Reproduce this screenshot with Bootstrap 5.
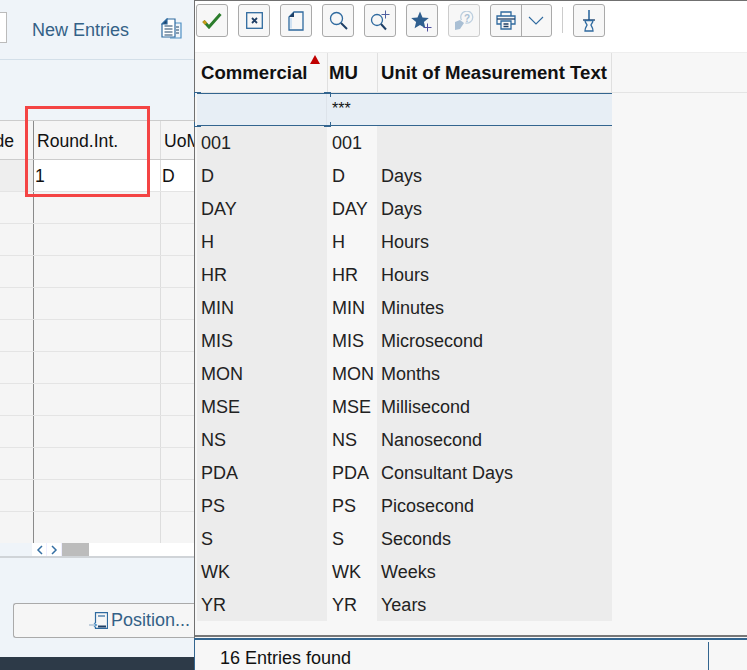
<!DOCTYPE html>
<html lang="en"><head><meta charset="utf-8"><title>Unit of Measurement</title>
<link href="https://cdn.jsdelivr.net/npm/bootstrap@5.3.0/dist/css/bootstrap.min.css" rel="stylesheet">
<style>
html,body{margin:0;height:670px;overflow:hidden;background:#eff4f9}
body{font-family:"Liberation Sans",Arial,sans-serif;font-size:18px;color:#111;line-height:1.2}
.stage{width:747px;height:670px;overflow:hidden}
.lp{width:194px;flex:none;height:670px;background:#eff4f9;overflow:hidden}
.ltop{height:60px;flex:none;border-bottom:1px solid #d3dfe9;padding-right:13px}
.stub{width:7px;height:31px;background:#fff;border:1px solid #bbb;border-left:0;margin-top:12px;flex:none}
.newent{color:#346187;font-size:18px;margin-left:25px;margin-top:20px;white-space:nowrap}
.docic{margin-left:32px;margin-top:18px;flex:none}
.lband{height:60px;flex:none}
.lgrid{background:#f5f5f5;height:423px;flex:none;overflow:hidden}
.lrow{height:32px;border-bottom:1px solid #e4e4e4}
.lrow.lhead{height:40px;border-top:1px solid #ccc;border-bottom:1px solid #ccc;font-size:17.6px}
.lc1{width:33px;flex:none;background:#f5f5f5;white-space:nowrap;overflow:hidden}
.lc2{width:128px;flex:none;border-left:1px solid #8a8a8a;border-right:1px solid #ddd}
.lc3{flex:1;white-space:nowrap;overflow:hidden}
.lhead>div{display:flex;align-items:center;background:#f5f5f5;color:#111;padding-top:4px}
.lhead .lc1{justify-content:flex-end;padding-right:19px;overflow:visible}
.lhead .lc2,.lhead .lc3{padding-left:3px}
.lsel{font-size:17.6px;background:#fff}
.lsel .lc1{background:#eee}
.lsel .lc2{background:#fff;padding-left:1px;padding-top:2px}
.lsel .lc3{padding-left:1px;padding-top:2px}
.lsel>div{display:flex;align-items:center}
.lscroll{height:15px;background:#fff;border-bottom:2px solid #d0d4d8;flex:none}
.lscroll .sp{width:32px;background:#eff4f9}
.lscroll .ar{width:15px;color:#346fa3;display:flex;align-items:center;justify-content:center;background:#fff;border-right:1px solid #eef}
.lscroll .th{width:27px;background:#bcbcbc}
.posbtn{margin:45px 0 0 13px;height:35px;border:1px solid #aaa;border-right:0;border-radius:3px 0 0 3px;background:#f6f6f6;color:#346187;font-size:18px;padding-right:4px;white-space:nowrap;flex:none}
.posbtn svg{flex:none;margin-right:3px}
.darkbar{height:13px;background:#2d3a48;margin-top:19px;flex:none}

.dlg{flex:1;height:670px;background:#f7f7f7;border-left:1px solid #707070;border-top:1px solid #707070;min-width:0}
.tb{height:51px;flex:none;background:#fff;padding:3px 0 0 1px;gap:10px}
.tbtn{width:32px;height:33px;border:1px solid #aaa;border-radius:3px;background:#f7f7f7;display:flex;align-items:center;justify-content:center;padding:0;flex:none}
.tbtn.off{border-color:#ccc}
.tgroup{width:62px;height:33px;border:1px solid #aaa;border-radius:3px;background:#f7f7f7;flex:none}
.tgroup>span{flex:1;display:flex;align-items:center;justify-content:center}
.tgroup>span+span{border-left:1px solid #aaa}
.tsep{width:1px;height:26px;background:#ccc;margin:3px 0 0 0;flex:none}
.hrow{height:41px;flex:none;border-top:1px solid #eee;border-bottom:1px solid #e4e4e4;font-weight:700;font-size:18.6px;padding-left:2px}
.c1{width:130px;flex:none;padding-left:4px}
.c2{width:50px;flex:none;padding-left:5px}
.c3{width:235px;flex:none;padding-left:4px;white-space:nowrap}
.hrow>div{display:flex;align-items:center;border-right:1px solid #e0e0e0;position:relative;padding-top:2px}
.hrow .c1{width:131px;padding-left:4px}
.hrow .c2{width:50px;padding-left:1px}
.hrow .c3{width:234px;padding-left:3px}
.sorttri{position:absolute;right:7px;top:2px;width:0;height:0;border-left:5px solid transparent;border-right:5px solid transparent;border-bottom:9px solid #c00000}
.frow{height:33px;flex:none;margin-left:2px;width:415px;background:#e7eef5;border-top:1px solid #33658f;border-bottom:1px solid #33658f;font-size:16px;position:relative}
.frow .c1{border-right:1px solid #dde3ea}
.frow .c2{padding-left:5px;padding-top:5px}
.cm{position:absolute;width:7px;height:5px;border-color:#33658f;border-style:solid;border-width:0}
.dbody{padding-left:2px;flex:none}
.drow{height:33px;font-size:18px;color:#222}
.drow>div{display:flex;align-items:center;padding-top:2px}
.drow .c1{background:#ececec}
.drow .c2{background:#f7f7f7}
.drow .c3{background:#ececec}
.dfoot{height:16px;border-bottom:2px solid #777;flex:none}
.statuswrap{flex:1 1 0;min-height:0;overflow:hidden;margin:1px 0 0 -1px;border-top:2px solid #33658f;border-left:1px solid #33658f;background:#f7f7f7}
.status{padding-left:25px;font-size:18px;padding-top:8px;white-space:nowrap}
.statusline{width:1px;background:#33658f;margin:2px 38px 0 0}
.redbox{position:absolute;left:25px;top:106px;width:125px;height:91px;border:3px solid #f44444;pointer-events:none}
</style></head>
<body>
<div class="stage d-flex position-relative">
  <div class="lp d-flex flex-column">
    <div class="ltop d-flex align-items-start">
      <div class="stub"></div>
      <div class="newent">New Entries</div>
      <svg class="docic" width="21" height="22" viewBox="0 0 21 22" fill="none" stroke="#2f6a9f" stroke-width="1.200"><path d="M13 5h7v15H9" stroke="#4f8fc4"/><path d="M1 6 6 1h8v18H1z" fill="#fff"/><path d="M1 6h5V1z" fill="#1e3f66"/><path d="M3.500 8h8M3.500 11h8M3.500 14h8M3.500 17h8" stroke="#1e4468"/><path d="M15 9h3M15 12h3M15 15h3" stroke="#1e4468"/></svg>
    </div>
    <div class="lband"></div>
    <div class="lgrid">
      <div class="lrow lhead d-flex"><div class="lc1">de</div><div class="lc2">Round.Int.</div><div class="lc3">UoM</div></div>
      <div class="lrow lsel d-flex"><div class="lc1"></div><div class="lc2">1</div><div class="lc3">D</div></div>
      <div class="lrow d-flex"><div class="lc1"></div><div class="lc2"></div><div class="lc3"></div></div>
      <div class="lrow d-flex"><div class="lc1"></div><div class="lc2"></div><div class="lc3"></div></div>
      <div class="lrow d-flex"><div class="lc1"></div><div class="lc2"></div><div class="lc3"></div></div>
      <div class="lrow d-flex"><div class="lc1"></div><div class="lc2"></div><div class="lc3"></div></div>
      <div class="lrow d-flex"><div class="lc1"></div><div class="lc2"></div><div class="lc3"></div></div>
      <div class="lrow d-flex"><div class="lc1"></div><div class="lc2"></div><div class="lc3"></div></div>
      <div class="lrow d-flex"><div class="lc1"></div><div class="lc2"></div><div class="lc3"></div></div>
      <div class="lrow d-flex"><div class="lc1"></div><div class="lc2"></div><div class="lc3"></div></div>
      <div class="lrow d-flex"><div class="lc1"></div><div class="lc2"></div><div class="lc3"></div></div>
      <div class="lrow d-flex"><div class="lc1"></div><div class="lc2"></div><div class="lc3"></div></div>
      <div class="lrow d-flex"><div class="lc1"></div><div class="lc2"></div><div class="lc3"></div></div>
    </div>
    <div class="lscroll d-flex">
      <div class="sp"></div>
      <div class="ar"><svg width="7" height="10" viewBox="0 0 7 10" fill="none" stroke="currentColor" stroke-width="1.500"><path d="M6 1 2 5l4 4"/></svg></div>
      <div class="ar"><svg width="7" height="10" viewBox="0 0 7 10" fill="none" stroke="currentColor" stroke-width="1.500"><path d="M1 1l4 4-4 4"/></svg></div>
      <div class="th"></div>
    </div>
    <div class="posbtn d-flex align-items-center justify-content-end">
      <svg width="19" height="17" viewBox="0 0 19 17" fill="none" stroke="#2f6a9f" stroke-width="1.200"><path d="M6.500 11V.6h12v15.800h-12V15"/><path d="M9 4h7" stroke-width="1.200"/><path d="M9 14.500h8" stroke="#1e3f66" stroke-width="2"/><path d="M0 13h7" stroke="#b6c6d6" stroke-width="1.600"/><path d="M5 11l2.500 2L5 15" stroke="#4f8fc4"/></svg>
      <span>Position...</span>
    </div>
    <div class="darkbar"></div>
  </div>

  <div class="dlg d-flex flex-column">
    <div class="tb d-flex align-items-start">
      <button type="button" class="tbtn" aria-label="OK"><svg width="20" height="17" viewBox="0 0 20 17" fill="none"><path d="M1.500 9l5.500 6L18.500 2" stroke="#2c7d2c" stroke-width="3"/><path d="M1.500 9 4 11.700" stroke="#c79a1b" stroke-width="3"/></svg></button>
      <button type="button" class="tbtn" aria-label="Cancel"><svg width="17" height="17" viewBox="0 0 17 17" fill="none"><rect x=".7" y=".7" width="15.600" height="15.600" stroke="#2f6a9f" stroke-width="1.300"/><path d="M6 6l5 5M11 6l-5 5" stroke="#1e3f66" stroke-width="1.800"/></svg></button>
      <button type="button" class="tbtn" aria-label="Copy"><svg width="16" height="20" viewBox="0 0 16 20" fill="none"><path d="M6 1h9v18H1V6z" stroke="#2f6a9f" stroke-width="1.300"/><path d="M1 6l5-5v5z" fill="#1e3f66"/><path d="M3 7v10.500" stroke="#a9cdee"/></svg></button>
      <button type="button" class="tbtn" aria-label="Find"><svg width="19" height="19" viewBox="0 0 19 19" fill="none"><circle cx="7.500" cy="7.500" r="6" stroke="#2f6a9f" stroke-width="1.300"/><path d="M12 12l6 6" stroke="#1e3f66" stroke-width="2"/></svg></button>
      <button type="button" class="tbtn" aria-label="Find next"><svg width="21" height="21" viewBox="0 0 21 21" fill="none"><circle cx="7" cy="10" r="5.500" stroke="#2f6a9f" stroke-width="1.300"/><path d="M11 14l5 5.500" stroke="#1e3f66" stroke-width="2"/><path d="M15.500 .5v8M11.500 4.500h8" stroke="#4f5fa0" stroke-width="1"/></svg></button>
      <button type="button" class="tbtn" aria-label="Favourite"><svg width="22" height="22" viewBox="0 0 22 22"><path d="M9 1.500l2.500 6 6.300.4-4.900 4.100 1.500 6.200L9 15l-5.400 3.200 1.500-6.200L.2 7.900l6.300-.4z" fill="#2f5f8f"/><path d="M16.500 13.500v8M12.500 17.500h8" stroke="#4f4fa0" stroke-width="1" fill="none"/></svg></button>
      <button type="button" class="tbtn off" aria-label="Help" disabled><svg width="20" height="20" viewBox="0 0 20 20" fill="none"><path d="M1 19V11l5-2 4 3-4 6z" fill="#a9bfd4"/><path d="M7.500 9a6 6 0 1 1 4 3" stroke="#bdcfdf" stroke-width="1.300"/><text x="13" y="10.500" text-anchor="middle" font-size="10" font-weight="700" font-family="Liberation Sans" fill="#a9bfd4">?</text></svg></button>
      <div class="tgroup d-flex">
        <span><svg width="20" height="19" viewBox="0 0 20 19" fill="none" stroke="#2f6a9f" stroke-width="1.300"><path d="M5 5V1h10v4"/><path d="M5 13H1V5h18v8h-4"/><path d="M1 8h18" stroke="#1e3f66"/><path d="M5 10h10v8H5z" fill="#f7f7f7"/><path d="M7.500 13h5M7.500 15.500h5" stroke="#1e3f66"/></svg></span>
        <span><svg width="16" height="9" viewBox="0 0 16 9" fill="none" stroke="#2f6a9f" stroke-width="1.100"><path d="M1 1l7 7 7-7"/></svg></span>
      </div>
      <div class="tsep"></div>
      <button type="button" class="tbtn" aria-label="Personalize"><svg width="14" height="22" viewBox="0 0 14 22" fill="none" stroke="#2f6a9f" stroke-width="1.300"><path d="M7 0v10" stroke-width="1.600"/><path d="M1 10h12" stroke="#1e3f66"/><path d="M3 10.500h8c0 2.500-2 3.500-2 4.500s2 2 2 6H3c0-4 2-5 2-6s-2-2-2-4.500z"/></svg></button>
    </div>
    <div class="hrow d-flex">
      <div class="c1">Commercial<span class="sorttri"></span></div>
      <div class="c2">MU</div>
      <div class="c3">Unit of Measurement Text</div>
    </div>
    <div class="frow d-flex">
      <div class="c1"></div><div class="c2">***</div>
      <span class="cm" style="left:-3px;top:-2px;border-left-width:1px;border-top-width:1px"></span>
      <span class="cm" style="left:127px;top:-2px;border-right-width:1px;border-top-width:1px"></span>
      <span class="cm" style="left:-3px;bottom:-2px;border-left-width:1px;border-bottom-width:1px"></span>
      <span class="cm" style="left:127px;bottom:-2px;border-right-width:1px;border-bottom-width:1px"></span>
    </div>
    <div class="dbody">
      <div class="drow d-flex"><div class="c1">001</div><div class="c2">001</div><div class="c3"></div></div>
      <div class="drow d-flex"><div class="c1">D</div><div class="c2">D</div><div class="c3">Days</div></div>
      <div class="drow d-flex"><div class="c1">DAY</div><div class="c2">DAY</div><div class="c3">Days</div></div>
      <div class="drow d-flex"><div class="c1">H</div><div class="c2">H</div><div class="c3">Hours</div></div>
      <div class="drow d-flex"><div class="c1">HR</div><div class="c2">HR</div><div class="c3">Hours</div></div>
      <div class="drow d-flex"><div class="c1">MIN</div><div class="c2">MIN</div><div class="c3">Minutes</div></div>
      <div class="drow d-flex"><div class="c1">MIS</div><div class="c2">MIS</div><div class="c3">Microsecond</div></div>
      <div class="drow d-flex"><div class="c1">MON</div><div class="c2">MON</div><div class="c3">Months</div></div>
      <div class="drow d-flex"><div class="c1">MSE</div><div class="c2">MSE</div><div class="c3">Millisecond</div></div>
      <div class="drow d-flex"><div class="c1">NS</div><div class="c2">NS</div><div class="c3">Nanosecond</div></div>
      <div class="drow d-flex"><div class="c1">PDA</div><div class="c2">PDA</div><div class="c3">Consultant Days</div></div>
      <div class="drow d-flex"><div class="c1">PS</div><div class="c2">PS</div><div class="c3">Picosecond</div></div>
      <div class="drow d-flex"><div class="c1">S</div><div class="c2">S</div><div class="c3">Seconds</div></div>
      <div class="drow d-flex"><div class="c1">WK</div><div class="c2">WK</div><div class="c3">Weeks</div></div>
      <div class="drow d-flex"><div class="c1">YR</div><div class="c2">YR</div><div class="c3">Years</div></div>
    </div>
    <div class="dfoot"></div>
    <div class="statuswrap d-flex">
      <div class="status flex-grow-1">16 Entries found</div>
      <div class="statusline"></div>
    </div>
  </div>
  <div class="redbox"></div>
</div>
<script src="https://cdn.jsdelivr.net/npm/bootstrap@5.3.0/dist/js/bootstrap.bundle.min.js"></script>
</body></html>
